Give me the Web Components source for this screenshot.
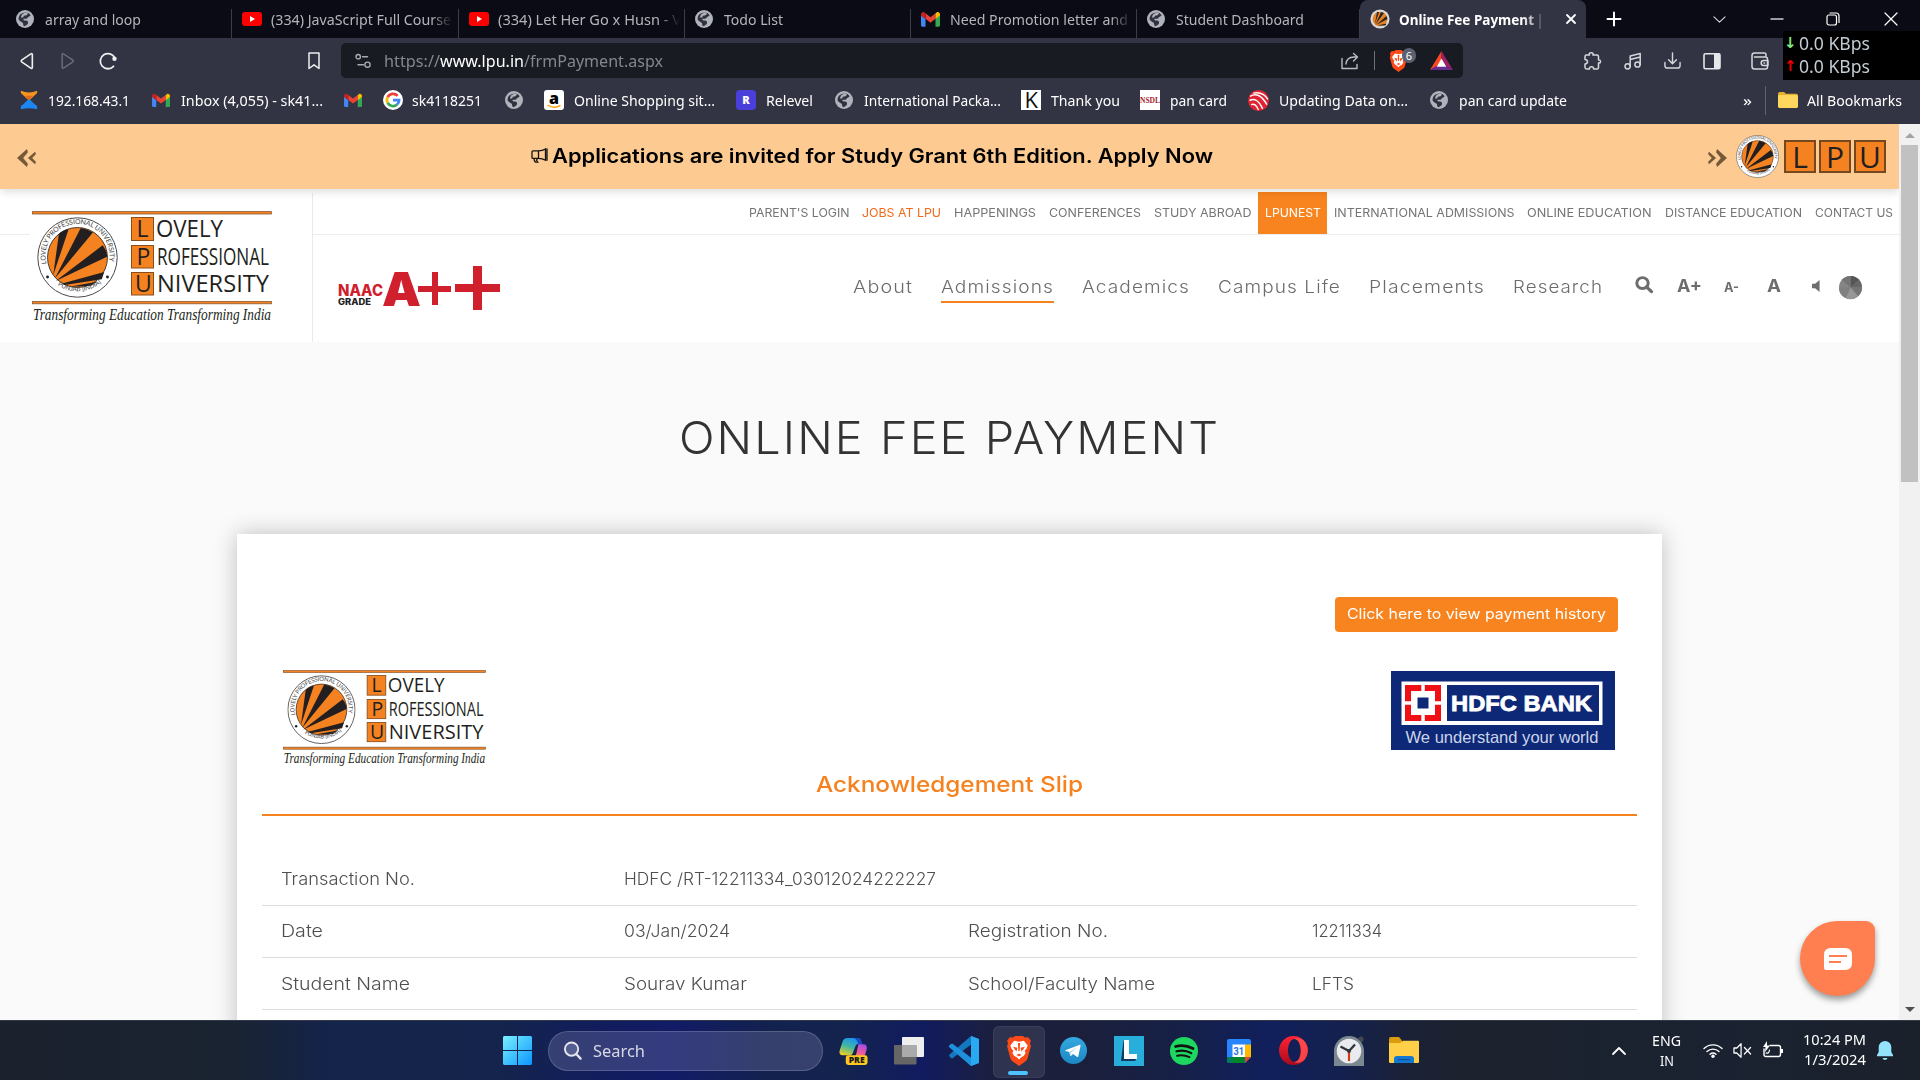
<!DOCTYPE html>
<html lang="en">
<head>
<meta charset="utf-8">
<title>Online Fee Payment</title>
<style>
html,body{margin:0;padding:0;width:1920px;height:1080px;overflow:hidden;background:#fff}
</style>
</head>
<body>
<desktop-screen></desktop-screen>
<script>
const UI = '"Noto Sans","Open Sans",sans-serif';
const WEB = 'Inter,"Liberation Sans",sans-serif';

const GLOBE = '<circle cx="12" cy="12" r="12" fill="#b0b3bb"/><path d="M11 3.500c4-1 7 1 8.500 3.500c-1 2-3 1.500-4 3c-.5 2-3 2-4.500 1.500c-2 0-1 2.500 1 2.500c2.500 0 4.500.5 4 3.500c-.5 2-3 3-5 4c-2-.5-1-3-2-4.500c-1.500-1.500-4-2-5.500-4.500c-.5-5 3-8.500 7.500-9z" fill="#30323f"/><path d="M13 3l3 1.500-2 2.500-3.500.5-1 2.500h-3l1.500-4z" fill="#b0b3bb"/>';
const GMAIL = '<path fill="#4285f4" d="M0 4.500v14a1.700 1.700 0 0 0 1.700 1.700h4V10.500L0 6z"/><path fill="#34a853" d="M18.300 20.200h4A1.700 1.700 0 0 0 24 18.500V6l-5.700 4.500z"/><path fill="#ea4335" d="M5.700 10.700V3.900L12 8.700l6.300-4.800v6.800L12 15.500z"/><path fill="#c5221f" d="M0 5.500v1.200l5.700 4.300V3.900L4.300 2.900C2.500 1.600 0 3 0 5.500z"/><path fill="#fbbc04" d="M18.300 3.900V11L24 6.700V5.500c0-2.500-2.500-3.900-4.300-2.600z"/>';
const LION = '<path fill="#fb4a17" d="M17.500 1.500 15.500 0h-7l-2 1.500-3-.3L1 4.500l.9 2.300L1 9.500l3.200 11.800c.3 1 1 1.700 1.800 2.300L12 28l6-4.400c.8-.6 1.500-1.300 1.800-2.300L23 9.500l-.9-2.700.9-2.300-2.500-3.300z"/><path fill="#fff" d="M12 5.300 7.500 4.500 4 8.800l1.100 3 1.700 2-.9 2 1.600 2.700 3 1.900L12 22l1.500-1.600 3-1.900 1.600-2.700-.9-2 1.700-2 1.100-3-3.500-4.300z"/><path fill="#fb4a17" d="m6.500 10 4 .9-.8 3.600L8 12.300zM17.500 10l-4 .9.800 3.600 1.700-2.200zM12 16.500l-2.500 1.300L12 19l2.500-1.200zM11 6.500h2l-.4 7.500h-1.200z"/>';
const SEAL = `<circle cx="50" cy="50" r="49" fill="#fff" stroke="#444" stroke-width="1.200"/>
<circle cx="50" cy="50" r="37" fill="#f58220" stroke="#231f20" stroke-width="1"/>
<g fill="#231f20"><path d="M20 72 27 21 Q32 16 39 15Z"/><path d="M22 76 54 13.500 Q63 15 69 19Z"/><path d="M23 79 81 35 Q87 43 86.500 49Z"/><path d="M31 82 83 68 80 77 34 84Z"/><path d="M40 86 74 80 67 85Z"/></g>
<circle cx="13" cy="74" r="1.800" fill="#222"/><circle cx="87" cy="74" r="1.800" fill="#222"/>
<path id="ar" d="M12.500 60.500A39.500 39.500 0 1 1 87.500 60.500" fill="none"/><path id="br" d="M7 60A45 45 0 0 0 93 60" fill="none"/>
<text font-family="Lato,sans-serif" font-size="8.500" fill="#444"><textPath href="#ar" textLength="140" startOffset="3">LOVELY PROFESSIONAL UNIVERSITY</textPath></text>
<text font-family="Lato,sans-serif" font-size="8" fill="#444"><textPath href="#br" textLength="58" startOffset="31">PUNJAB [INDIA]</textPath></text>`;

const S = (w, s) => `fill="none" stroke="${s || '#d6d7dc'}" stroke-width="${w}" stroke-linecap="round" stroke-linejoin="round"`;
const ICONS = {
 globe:['0 0 24 24',GLOBE], gmail:['0 0 24 23',GMAIL], brave:['0 0 24 28',LION], seal:['0 0 100 100',SEAL],
 youtube:['0 0 20 20','<rect y="3" width="20" height="14" rx="3" fill="#f00"/><path d="M8 7v6l5-3z" fill="#fff"/>'],
 lpufav:['0 0 20 20','<circle cx="10" cy="10" r="9.600" fill="#d8d8d8"/><circle cx="10" cy="10" r="7.300" fill="#e58228"/><path d="M5 15 7 3l2 0zM5.500 15.500 11 3l3 1zM6 16 16.500 7l1 3zM7 16.500l9.500-2-1 2z" fill="#2c2420"/>'],
 x:['0 0 10 10',`<path d="M1 1l8 8M9 1l-8 8" ${S(1.8,'#fff')}/>`],
 plus:['0 0 16 16',`<path d="M8 1.500v13M1.500 8h13" ${S(2,'#fff')}/>`],
 down:['0 0 14 8',`<path d="M1 1l6 6 6-6" ${S(1.2)}/>`],
 min:['0 0 14 14',`<path d="M.5 7h13" stroke="#fff" stroke-width="1.200"/>`],
 max:['0 0 14 14',`<rect x="1" y="3" width="9.500" height="10" rx="2" ${S(1.2,'#fff')}/><path d="M4 1h6a3 3 0 0 1 3 3v6.500" ${S(1.2,'#fff')}/>`],
 winx:['0 0 14 14',`<path d="M1 1l12 12M13 1L1 13" ${S(1.2,'#fff')}/>`],
 back:['0 0 14 20',`<path d="M12.800 3v14q0 2-1.600.8L1.700 11q-1-1 0-2l9.500-6.800q1.600-1.200 1.600.8z" ${S(1.7,'#eee')}/>`],
 fwd:['0 0 14 20',`<path d="M1.200 3v14q0 2 1.600.8L12.300 11q1-1 0-2L2.800 2.200Q1.200 1 1.200 3z" ${S(1.5,'#6b6d7a')}/>`],
 reload:['0 0 18 18',`<path d="M14.500 14.300A7.600 7.600 0 1 1 15.800 6" ${S(1.8,'#eee')}/><circle cx="15.500" cy="6.800" r="2.200" fill="#eee"/>`],
 mark:['0 0 12 18',`<path d="M1 1h10v15.500L6 12.800 1 16.500z" ${S(1.5,'#eee')}/>`],
 site:['0 0 16 16',`<circle cx="3.200" cy="3.700" r="2.200" ${S(1.4,'#a9abb3')}/><path d="M7.500 3.700h5M3 11.700h5.500" ${S(1.4,'#a9abb3')}/><circle cx="12.500" cy="11.700" r="2.600" ${S(1.4,'#a9abb3')}/>`],
 share:['0 0 18 18',`<path d="M1 6.500v10h15v-4M5 12c.5-5 4-7 8-7h3M12.500 1.500 16.500 5l-4 4" ${S(1.4,'#b9bbc2')}/>`],
 bat:['0 0 24 20','<path d="M12 0 0 20l12-7z" fill="#ff4724"/><path d="M12 0l12 20-12-7z" fill="#9e1f63"/><path d="M0 20h24l-12-7z" fill="#662d91"/><path d="M12 8l5 8.500H7z" fill="#fff"/>'],
 puzzle:['0 0 18 18',`<path d="M2 4.500Q2 3 3.500 3h3q-.8-2.300 1.700-2.300T9.900 3h4Q15.500 3 15.500 4.500V8q2-.3 2 1.500t-2 1.500v4Q15.500 17 14 17H10.500q.3-2.300-2-2.300t-2 2.300h-3Q2 17 2 15.300V12q2.500-.2 2.500-2.200T2 7.500z" ${S(1.5)}/>`],
 music:['0 0 18 18',`<circle cx="3.600" cy="14.300" r="2.600" ${S(1.5)}/><circle cx="13.500" cy="12.500" r="2.600" ${S(1.5)}/><path d="M6.200 14V4l10-2.500v11M6.200 7.500l10-2.500" ${S(1.5)}/>`],
 dl:['0 0 18 18',`<path d="M1 11v3.500Q1 17 3.500 17h11q2.500 0 2.500-2.500V11M9 1v11M4.800 8.200 9 12.400l4.200-4.200" ${S(1.5)}/>`],
 side:['0 0 18 18','<rect x="1" y="1.700" width="16" height="15" rx="1.500" fill="none" stroke="#e6e7ea" stroke-width="1.600"/><path d="M11 1.500h6v15.500h-6z" fill="#e6e7ea"/>'],
 wallet:['0 0 18 18',`<path d="M15 5V2.500Q15 1 13.500 1h-10Q1 1 1 3.500v11Q1 17 3.500 17h11q2 0 2-2V7q0-2-2-2h-11M17 8.500h-4.500q-2.300 0-2.300 2.500t2.300 2.500H17zM13 11h.5" ${S(1.5)}/>`],
 xender:['0 0 18 24','<path d="M1 1q8 4 16 0 1 3-2 5l-6 7-6-7Q0 4 1 1z" fill="#f7941d"/><path d="M1 23q8-2 16 0 1-4-2-5.500L9 10.500l-6 7Q0 19 1 23z" fill="#1c86f2"/><path d="M5 7l4 5 4-5z" fill="#e2661d"/>'],
 google:['0 0 24 24','<circle cx="12" cy="12" r="12" fill="#fff"/><g fill="none" stroke-width="3.300"><path d="M17.500 7A7.300 7.300 0 0 0 5.600 8.500" stroke="#ea4335"/><path d="M5.600 8.500a7.300 7.300 0 0 0 0 7" stroke="#fbbc05"/><path d="M5.600 15.500A7.300 7.300 0 0 0 16.800 17.500" stroke="#34a853"/><path d="M16.800 17.500a7.300 7.300 0 0 0 2.500-5.300H12" stroke="#4285f4"/></g>'],
 amazon:['0 0 20 20','<rect width="20" height="20" rx="3" fill="#fff"/><text x="10" y="13.500" text-anchor="middle" font-family="Open Sans,sans-serif" font-weight="800" font-size="16" fill="#000">a</text><path d="M3.500 15q6.500 4.500 13 .3" stroke="#f90" stroke-width="1.500" fill="none"/>'],
 relevel:['0 0 20 20','<rect width="20" height="20" rx="4" fill="#4b3fdc"/><text x="10" y="14" text-anchor="middle" font-family="Open Sans,sans-serif" font-weight="800" font-size="11" fill="#fff">R</text>'],
 k:['0 0 20 20','<rect width="20" height="20" fill="#fff"/><text x="3.500" y="18" textLength="13.500" lengthAdjust="spacingAndGlyphs" font-family="Open Sans,sans-serif" font-size="22" fill="#111">K</text>'],
 nsdl:['0 0 20 20','<rect width="20" height="20" fill="#fff"/><text x="0" y="13" textLength="20" lengthAdjust="spacingAndGlyphs" font-family="Liberation Serif,serif" font-weight="700" font-size="9" fill="#a3262e">NSDL</text>'],
 waves:['0 0 20 20','<circle cx="10" cy="10" r="10" fill="#e02433"/><g fill="none" stroke="#fff" stroke-width="1.400"><path d="M2 6q9-5 16 8M1.500 10q7-4 12.500 8M3 14q4-2 7 5M5 3q9-2 14 6"/></g>'],
 folder:['0 0 20 18','<path d="M0 2Q0 0 2 0h4l2 2h10q2 0 2 2v12q0 2-2 2H2q-2 0-2-2z" fill="#e5b030"/><path d="M0 5q0-1.500 2-1.500h16q2 0 2 2V16q0 2-2 2H2q-2 0-2-2z" fill="#ffd75e"/>'],
 laq:['0 0 20 20','<path d="M10.500 0 0 10l10.500 10L11.500 16.500 6.500 10l5-6.500z" fill="#75593a"/><path d="M19 3 11.500 10l7.500 7 1-2.500L16 10l4-4.500z" fill="#75593a"/>'],
 raq:['0 0 20 20','<path d="M9.500 0 20 10 9.500 20 8.500 16.500 13.500 10l-5-6.500z" fill="#75593a"/><path d="M1 3 8.500 10 1 17 0 14.500 4 10 0 5.500z" fill="#75593a"/>'],
 horn:['0 0 17 16','<path d="M1 4q0-1 1-1h5.500q4 0 7-2v12q-3-2-7-2H2q-1 0-1-1zM7.500 3v8M3 11q0 3 1.500 4.200h2.300L5.500 13l1-2M16 .5v13" fill="none" stroke="#111" stroke-width="1.300"/>'],
 search:['0 0 18 18',`<circle cx="7.500" cy="7.500" r="5.700" fill="none" stroke="#6d6d6d" stroke-width="3"/><path d="M11.500 11.500l5 5" stroke="#6d6d6d" stroke-width="3.200" stroke-linecap="round"/>`],
 spk:['0 0 9 13','<path d="M0 4h3.500L8.500 0v13L3.500 9H0z" fill="#6d6d6d"/>'],
 wheel:['0 0 24 24','<circle cx="12" cy="12" r="12" fill="#858585"/><path d="M12 12V0a12 12 0 0 1 9 4z" fill="#555"/><path d="M12 12l9-8a12 12 0 0 1 3 8z" fill="#666"/><path d="M12 12h12a12 12 0 0 1-4 9z" fill="#757575"/><path d="M12 12l8 9a12 12 0 0 1-13 2z" fill="#979797"/><path d="M12 12L7 23a12 12 0 0 1-7-11z" fill="#808080"/><path d="M12 12L3 4a12 12 0 0 1 9-4z" fill="#747474"/>'],
 win:['0 0 29 29','<defs><linearGradient id="w" x2="1" y2="1"><stop stop-color="#7af0ff"/><stop offset="1" stop-color="#0a96ff"/></linearGradient></defs><path d="M1 0h13v14H0V1zM15 0h13l1 1v13H15zM0 15h14v14H1l-1-1zM15 15h14v13l-1 1H15z" fill="url(#w)"/>'],
 tsearch:['0 0 20 20','<circle cx="9" cy="8.500" r="7" fill="#555e92" stroke="#e4e6ee" stroke-width="2"/><path d="M14.200 14l4.300 4.500" stroke="#e4e6ee" stroke-width="2.500" stroke-linecap="round"/>'],
 copilot:['0 0 30 29','<defs><linearGradient id="c" x1=".6" x2=".2" y2="1"><stop stop-color="#1893f0"/><stop offset=".5" stop-color="#43b6a0"/><stop offset="1" stop-color="#f5d020"/></linearGradient><linearGradient id="d" x1=".8" x2=".3" y2="1"><stop stop-color="#9b4bf0"/><stop offset=".6" stop-color="#f0589a"/><stop offset="1" stop-color="#ff8a5c"/></linearGradient></defs><path d="M9 1h10q3 0 4 4l.5 2h-3q-3 0-4 4l-2 5q-1 3-4 3H4q-5 0-3-6l3-9q1-3 5-3z" fill="url(#c)"/><path d="M18 1h2q2.500 0 3.500 4l.7 3H20q-1-6-5-7z" fill="#1948c4"/><path d="M20 7.500h5q5 0 3.500 6L27 18q-1 3-4 3h-9q3 0 4-4z" fill="url(#d)"/><rect x="7" y="19" width="22.500" height="10" rx="2.500" fill="#ffc81e"/><text x="10" y="27" textLength="16.500" lengthAdjust="spacingAndGlyphs" font-family="Open Sans,sans-serif" font-weight="800" font-size="8.500" fill="#1b1b1b">PRE</text>'],
 taskview:['0 0 30 28','<rect x="8" y="0" width="22" height="20" rx="1" fill="#eee"/><rect x="0" y="8" width="22.500" height="19.500" rx="1" fill="#666"/><path d="M8 8h14.500v12H8z" fill="#aaa"/>'],
 vscode:['0 0 30 30','<path d="M22 0l8 3v24l-8 3L9 18 4 22q-1 .8-2 0L.5 20.500q-1-1 0-2L22 0z" fill="#1478c0"/><path d="M22 0l8 3v24l-8 3z" fill="#29a9f2"/><path d="M0 9.500 2 8q1-.8 2 0l18 14v8L.5 11.500q-1-1-.5-2z" fill="#1e90dc"/><path d="M22 8.500v13L13.500 15z" fill="#171d4b"/>'],
 telegram:['0 0 28 28','<defs><linearGradient id="t" x2="0" y2="1"><stop stop-color="#34a9e0"/><stop offset="1" stop-color="#1c86c4"/></linearGradient></defs><circle cx="14" cy="14" r="14" fill="url(#t)"/><path d="M5.500 13.800 20.500 8q1-.3.800 1L19 20q-.3 1.200-1.500.5l-4-3-2 2q-.8.700-1-.5L9.700 15.500 5.700 14.500z" fill="#fff"/><path d="M9.700 15.500 18 10l-6.700 6.700-.5 3z" fill="#b8d9ec"/>'],
 lapp:['0 0 30 30','<rect width="30" height="30" fill="#27aedb"/><path d="M9.500 4.500 7 25h14l2-3H13V4.500z" fill="#103a64"/><path d="M10 4h5v14h8v5H10z" fill="#fff"/>'],
 spotify:['0 0 28 28','<circle cx="14" cy="14" r="14" fill="#1ed760"/><g fill="none" stroke="#121212" stroke-linecap="round"><path d="M5.500 9.500q9-2.500 17.500 2" stroke-width="2.700"/><path d="M6.500 14.300q8-2 14.800 1.800" stroke-width="2.200"/><path d="M7 18.700q6.500-1.500 12.500 1.500" stroke-width="1.900"/></g>'],
 gcal:['0 0 24 24','<rect width="24" height="24" rx="2" fill="#2684fc"/><path d="M18 5.500h6V18h-6z" fill="#ffba00"/><path d="M0 18h18v6H2q-2 0-2-2z" fill="#00832d"/><path d="M0 18h5.500v6H2q-2 0-2-2z" fill="#0066da" opacity=".25"/><path d="M18 18h6l-6 6z" fill="#ea4335"/><path d="M18.200 24 24 18.200V24z" fill="#171f4c"/><path d="M5.500 5.500H18V18H5.500z" fill="#fff"/><text x="6.500" y="16" textLength="10.500" lengthAdjust="spacingAndGlyphs" font-family="Roboto,sans-serif" font-weight="700" font-size="11" fill="#1a73e8">31</text>'],
 opera:['0 0 29 29','<defs><linearGradient id="o" x2="0" y2="1"><stop stop-color="#ff2434"/><stop offset="1" stop-color="#a80a1c"/></linearGradient></defs><path fill-rule="evenodd" d="M14.500 0a14.500 14.500 0 1 0 0 29 14.500 14.500 0 0 0 0-29zm1 3c3.800 0 6 5.500 6 11.500S19.300 26 15.500 26 9 20.500 9 14.500 11.700 3 15.500 3z" fill="url(#o)"/><path d="M15 3c2-2 6-1 9.200 1a14.500 14.500 0 0 1 0 21c-3.200 2-7 2.500-9.200 1 4.500 0 7-5.500 7-11.500S19.500 3 15 3z" fill="#ff4f50" opacity=".85"/>'],
 clock:['0 0 30 30','<path d="M24 2l4-2 2 4-3 3z" fill="#434850"/><path d="M0 15A15 15 0 0 1 30 15v15H0z" fill="#7c8891"/><circle cx="15" cy="15" r="12.300" fill="#e9ebee"/><path d="M6.500 10.500 15 15l6-6.500" fill="none" stroke="#30343a" stroke-width="2.300"/><path d="M15 15v10" stroke="#d23c11" stroke-width="2.200"/><circle cx="15" cy="15" r="1.900" fill="#30343a"/>'],
 explorer:['0 0 30 27','<path d="M0 2q0-2 2-2h8l3 3.500V10H0z" fill="#d99c0c"/><path d="M0 6h11l3-2.200h15q1 0 1 1V25q0 1-1 1H1q-1 0-1-1z" fill="#ffcf48"/><path d="M5 26v-4q0-3 3-3h14q3 0 3 3v4z" fill="#1478d0"/><path d="M9 22.700h12" stroke="#0a4a90" stroke-width="1"/>'],
 up:['0 0 14 8',`<path d="M1 7l6-6 6 6" ${S(1.8,'#fff')}/>`],
 wifi:['0 0 20 15',`<path d="M1 5.500a13 13 0 0 1 18 0M4 8.500a8.700 8.700 0 0 1 12 0M7 11.300a4.600 4.600 0 0 1 6 0" ${S(1.4,'#fff')}/><circle cx="10" cy="13.200" r="1.700" fill="#fff"/>`],
 mute:['0 0 20 15',`<path d="M1 5h3l4.500-4.200v13.400L4 10H1zM12 4.500l6.500 6.500M18.500 4.500 12 11" ${S(1.3,'#fff')}/>`],
 batt:['0 0 20 17',`<path d="M7 4.500h8.500q2 0 2 2v7q0 2-2 2H3q-2 0-2-2V8" ${S(1.4,'#fff')}/><path d="M18 8h2v4h-2zM4 0 0 6h2.500L2 11l5-6.500H4z" fill="#fff"/><path d="M3 12q3 1 3.500-3" ${S(1.2,'#fff')}/>`],
 bell:['0 0 16 19','<path d="M8 0a6.300 6.300 0 0 0-6.300 6.300V11L0 14v1.300h16V14l-1.700-3V6.300A6.300 6.300 0 0 0 8 0zM5.500 17h5q-.5 2-2.500 2t-2.500-2z" fill="#93e4fb"/>'],
 chat:['0 0 28 22','<path d="M7 0h14q7 0 7 7v8q0 7-7 7H2q-2 0-2-2V7q0-7 7-7z" fill="#fff"/><path d="M5 8h18M5 14h12" stroke="#ff7f50" stroke-width="2"/>']
};

const define = (name, css, html) => customElements.define(name, class extends HTMLElement {
  connectedCallback() {
    if (this.shadowRoot) return;
    this.attachShadow({mode: 'open'}).innerHTML = `<style>*{box-sizing:border-box}${css}:host{box-sizing:border-box}</style>${html}`;
  }
});

/* Inline text stretched or condensed to an exact advance width. */
customElements.define('fit-text', class extends HTMLElement {
  connectedCallback() {
    if (this.shadowRoot) return;
    const w = +this.getAttribute('w');
    this.attachShadow({mode: 'open'}).innerHTML = `<style>:host{display:inline-block;flex:none;width:${w}px;white-space:nowrap}span{display:inline-block;transform-origin:0 50%}</style><span><slot></slot></span>`;
    const s = this.shadowRoot.querySelector('span');
    const n = s.offsetWidth ? s.getBoundingClientRect().width : 0;
    if (n) s.style.transform = `scaleX(${w / n})`;
  }
});

customElements.define('ui-icon', class extends HTMLElement {
  connectedCallback() {
    if (this.shadowRoot) return;
    const [vb, body] = ICONS[this.getAttribute('name')];
    const w = this.getAttribute('w'), h = this.getAttribute('h') || w;
    this.attachShadow({mode: 'open'}).innerHTML = `<style>:host{display:block;flex:none;width:${w}px;height:${h}px}svg{display:block;width:100%;height:100%;overflow:visible}</style><svg viewBox="${vb}" preserveAspectRatio="none">${body}</svg>`;
  }
});

customElements.define('browser-tab', class extends HTMLElement {
  connectedCallback() {
    if (this.shadowRoot) return;
    const a = this.hasAttribute('active'), iw = this.getAttribute('iw') || 18;
    this.attachShadow({mode: 'open'}).innerHTML = `<style>:host{box-sizing:border-box;display:flex;align-items:center;flex:none;width:226px;height:38px;padding-left:10px;color:${a ? '#fff' : '#b4b5ba'};font:${a ? 700 : 400} 14.500px/20px ${UI};background:${a ? '#323443' : 'linear-gradient(#3c3d46,#3c3d46) right bottom/1px 29px no-repeat'};border-radius:${a ? '8px 8px 0 0' : 0}}
    div{overflow:hidden;white-space:nowrap;margin-left:${29 - iw}px;width:${a ? 153 : 182}px;height:20px;margin-top:-1px;${this.hasAttribute('fade') ? `-webkit-mask-image:linear-gradient(90deg,#000 ${a ? 80 : 88}%,transparent)` : ''}}
    ui-icon[name=x]{margin-left:14px}</style>
    <ui-icon name="${this.getAttribute('icon')}" w="${iw}"></ui-icon><div><slot></slot></div>${a ? '<ui-icon name="x" w="10"></ui-icon>' : ''}`;
  }
});

define('tab-strip', `:host{display:flex;height:38px;background:#0b0b15;padding-left:6px;align-items:center}
 .r{display:flex;align-items:center}`,
`<browser-tab icon="globe"><fit-text w="96">array and loop</fit-text></browser-tab>
<browser-tab icon="youtube" iw="20" fade style="width:227px"><fit-text w="180">(334) JavaScript Full Course</fit-text></browser-tab>
<browser-tab icon="youtube" iw="20" fade><fit-text w="183">(334) Let Her Go x Husn - V</fit-text></browser-tab>
<browser-tab icon="globe"><fit-text w="59">Todo List</fit-text></browser-tab>
<browser-tab icon="gmail" iw="19" fade><fit-text w="178">Need Promotion letter and</fit-text></browser-tab>
<browser-tab icon="globe" style="width:223px"><fit-text w="128">Student Dashboard</fit-text></browser-tab>
<browser-tab icon="lpufav" iw="20" active fade><fit-text w="135">Online Fee Payment</fit-text><fit-text w="9" style="font-weight:400">&nbsp;|</fit-text>&nbsp; |</browser-tab>
<div class="r"><ui-icon name="plus" w="16" style="margin-left:20px"></ui-icon><ui-icon name="down" w="13" h="7" style="margin-left:91px"></ui-icon>
<ui-icon name="min" w="14" style="margin-left:44px"></ui-icon><ui-icon name="max" w="14" style="margin-left:42px"></ui-icon><ui-icon name="winx" w="14" style="margin-left:44px"></ui-icon></div>`);

define('address-bar', `:host{display:flex;align-items:center;width:1122px;height:35px;margin-left:21px;border-radius:5px;background:#191b22;padding-left:14px;color:#85878e;font:17px/24px ${UI}}
 b{font-weight:400;color:#fff}.sp{flex:1}i{width:1px;height:19px;background:#70727a;margin:0 14px 0 15px}
 .shield{position:relative;margin-right:22px}.n{position:absolute;left:13px;top:-2px;width:14px;height:15px;border-radius:7px;background:#5d606e;color:#fff;font:11px/15px ${UI};text-align:center}`,
`<ui-icon name="site" w="16"></ui-icon><fit-text w="56" style="margin-left:13px">https://</fit-text><fit-text w="84"><b>www.lpu.in</b></fit-text><fit-text w="139">/frmPayment.aspx</fit-text><span class="sp"></span>
<ui-icon name="share" w="18"></ui-icon><i></i><span class="shield"><ui-icon name="brave" w="19" h="22"></ui-icon><span class="n">6</span></span><ui-icon name="bat" w="23" h="19" style="margin-right:10px"></ui-icon>`);

define('tool-bar', `:host{display:flex;align-items:center;height:45px;background:#323443;padding-left:20px}`,
`<ui-icon name="back" w="13.500" h="18"></ui-icon><ui-icon name="fwd" w="13.500" h="18" style="margin-left:27px"></ui-icon><ui-icon name="reload" w="18" style="margin-left:25px"></ui-icon><ui-icon name="mark" w="12" h="18" style="margin-left:191px"></ui-icon>
<address-bar></address-bar>
<ui-icon name="puzzle" w="18" style="margin-left:120px"></ui-icon><ui-icon name="music" w="18" style="margin-left:23px"></ui-icon><ui-icon name="dl" w="17" style="margin-left:22px"></ui-icon><ui-icon name="side" w="18" style="margin-left:22px"></ui-icon><ui-icon name="wallet" w="18" style="margin-left:30px"></ui-icon>`);

const BM = [['xender',18,20,10,82,'192.168.43.1'],['gmail',18,22,11,142,'Inbox (4,055) - sk41...'],['gmail',18,21],['google',20,21,9,70,'sk4118251'],['globe',18,23],['amazon',20,21,10,141,'Online Shopping sit...'],['relevel',20,21,10,47,'Relevel'],['globe',18,22,11,137,'International Packa...'],['k',20,20,10,69,'Thank you'],['nsdl',20,20,10,57,'pan card'],['waves',21,21,10,129,'Updating Data on...'],['globe',18,22,11,108,'pan card update']];
define('bookmark-bar', `:host{display:flex;align-items:center;height:41px;background:#323443;color:#fff;font:14.500px/20px ${UI};padding-bottom:7px}.sp{flex:1}i{width:1px;height:29px;background:#60626e;margin:0 12px 0 13px}`,
BM.map(b => `<ui-icon name="${b[0]}" w="${b[1]}" h="${b[0] === 'xender' ? 20 : b[0] === 'gmail' ? 17 : b[1]}" style="margin-left:${b[2]}px"></ui-icon>${b[5] ? `<fit-text w="${b[4]}" style="margin-left:${b[3]}px">${b[5]}</fit-text>` : ''}`).join('') +
`<span class="sp"></span><fit-text w="9">»</fit-text><i></i><ui-icon name="folder" w="20" h="16"></ui-icon><fit-text w="95" style="margin:0 18px 0 9px">All Bookmarks</fit-text>`);

define('net-speed', `:host{position:absolute;left:1783px;top:31px;width:137px;height:49px;background:#000;color:#c3ccd3;display:flex;flex-direction:column;font:18px/24px ${UI};padding-left:4px}
 div{display:flex;align-items:center;height:23px}span{width:12px;font:700 15px/20px "DejaVu Sans",sans-serif;text-indent:-3px}.g{color:#7fe87f}.r{color:#f00000}`,
`<div><span class="g">↓</span><fit-text w="71">0.0 KBps</fit-text></div><div><span class="r">↑</span><fit-text w="71">0.0 KBps</fit-text></div>`);

define('grant-banner', `:host{position:relative;z-index:2;flex:none;display:flex;align-items:center;height:65px;background:#fdcb91;box-shadow:0 3px 8px rgba(0,0,0,.13);padding:0 13px 0 17px}
 .t{flex:1;display:flex;align-items:center;padding:0 0 2px 495px;color:#000;font:600 19.500px/26px ${WEB};gap:4px}
 .q{width:32px;height:33px;margin-left:3px;background:#f58220;border:2px solid #75481f;color:#231f20;font:30px/29px "Open Sans",sans-serif;display:flex;justify-content:center}`,
`<ui-icon name="laq" w="19" h="18" style="margin-top:3px"></ui-icon><div class="t"><ui-icon name="horn" w="17" h="15"></ui-icon><fit-text w="661">Applications are invited for Study Grant 6th Edition. Apply Now</fit-text></div>
<ui-icon name="raq" w="19" h="18" style="margin-top:3px;margin-right:9px"></ui-icon><ui-icon name="seal" w="43" style="margin-right:2px"></ui-icon><span class="q">L</span><span class="q">P</span><span class="q">U</span>`);

define('lpu-logo', `:host{display:block;flex:none}.root{display:block;width:100%;height:100%;overflow:visible}`,
`<svg class="root" viewBox="0 0 240 116" preserveAspectRatio="none"><g fill="#f58220" stroke="#8a5a35" stroke-width=".8"><rect x=".4" y=".6" width="239" height="2.400"/><rect x=".4" y="90.400" width="239" height="2.400"/></g>
<svg x="5" y="6" width="81" height="81" viewBox="0 0 100 100">${SEAL}</svg>
<g fill="#f58220" stroke="#8a4e1c" stroke-width="1"><rect x="99.500" y="6.500" width="22" height="23"/><rect x="99.500" y="34.500" width="22" height="22.500"/><rect x="99.500" y="61.500" width="22" height="22.500"/></g>
<g font-family="Open Sans,Noto Sans,sans-serif" font-size="23" fill="#231f20"><text x="104.500" y="26">L</text><text x="104.500" y="54">P</text><text x="103" y="81">U</text>
<text x="124" y="26" textLength="67" lengthAdjust="spacingAndGlyphs">OVELY</text><text x="125" y="54" textLength="112" lengthAdjust="spacingAndGlyphs">ROFESSIONAL</text><text x="125" y="81" textLength="112" lengthAdjust="spacingAndGlyphs">NIVERSITY</text></g>
<text x="1" y="109" textLength="238" lengthAdjust="spacingAndGlyphs" font-family="Liberation Serif,serif" font-style="italic" font-size="17" fill="#231f20">Transforming Education Transforming India</text></svg>`);

define('naac-grade', `:host{display:block;flex:none;width:164px;height:46px}svg{display:block;overflow:visible}`,
`<svg width="164" height="46"><g fill="#d0202e" font-family="Inter,sans-serif" font-weight="800"><text x="0" y="32" font-size="15.500" textLength="45" lengthAdjust="spacingAndGlyphs">NAAC</text><text x="44" y="41.500" font-size="47" textLength="39" lengthAdjust="spacingAndGlyphs" font-weight="900">A</text><path d="M80 22h14V8h6v14h13v6h-13v13h-6V28H80zM117 20h18V2h9v18h18v8h-18v18h-9V28h-18z"/></g><text x="0" y="40.500" font-family="Inter,sans-serif" font-weight="800" font-size="8.500" textLength="33" lengthAdjust="spacingAndGlyphs" fill="#222">GRADE</text></svg>`);

const TOP = [["PARENT'S LOGIN",100.5],['JOBS AT LPU',79,'o'],['HAPPENINGS',82],['CONFERENCES',92],['STUDY ABROAD',97.5],['LPUNEST',56,'b'],['INTERNATIONAL ADMISSIONS',180.5],['ONLINE EDUCATION',124.5],['DISTANCE EDUCATION',137],['CONTACT US',78]];
const NAV = [['About',60],['Admissions',113,'u'],['Academics',108],['Campus Life',123],['Placements',116],['Research',90]];
define('site-header', `:host{display:flex;flex:none;height:153px;background:#fff}
 .l{width:313px;border-right:1px solid #eaeaea;margin-top:4px;padding:18px 0 0 32px;background:linear-gradient(#eee,#eee) 0 41px/30px 1px no-repeat}
 .r{flex:1;display:flex;flex-direction:column}
 .top{height:46px;border-bottom:1px solid #ececec;display:flex;justify-content:flex-end;padding-top:3px;font:400 11.800px/42px ${WEB};color:#757575}
 .top span{padding:0 6.500px;height:42px}.o{color:#f26a1b}.b{background:#f8841f;color:#fff}
 .main{flex:1;display:flex;align-items:center;padding:0 37px 4px 25px;color:#777}
 nav{display:flex;gap:28px;margin-left:auto;font:300 17.500px/26px ${WEB};letter-spacing:1px;color:#6c6c6c}
 nav span{height:32px;padding-top:3px}.u{border-bottom:2px solid #f5821f;}
 .f{display:flex;align-items:center;font-family:${WEB};font-weight:700;color:#6d6d6d;line-height:22px;padding-bottom:1px}`,
`<div class="l"><lpu-logo style="width:240px;height:116px"></lpu-logo></div><div class="r"><div class="top">${TOP.map(t => `<span class="${t[2] || ''}"><fit-text w="${t[1]}">${t[0]}</fit-text></span>`).join('')}</div>
<div class="main"><naac-grade></naac-grade><nav>${NAV.map(t => `<span class="${t[2] || ''}"><fit-text w="${t[1]}">${t[0]}</fit-text></span>`).join('')}</nav>
<div class="f"><ui-icon name="search" w="18" h="17" style="margin:0 0 3px 32px"></ui-icon><fit-text w="25" style="font-size:17.500px;margin-left:24px">A+</fit-text><fit-text w="15" style="font-size:13px;margin:2px 0 0 22px">A-</fit-text><fit-text w="14" style="font-size:17.500px;margin-left:28px">A</fit-text><ui-icon name="spk" w="8" h="12" style="margin-left:31px"></ui-icon><ui-icon name="wheel" w="23" style="margin:3px 0 0 19px"></ui-icon></div></div></div>`);

define('hdfc-logo', `:host{display:block;width:224px;height:79px}svg{display:block}`,
`<svg width="224" height="79"><rect width="224" height="79" fill="#0c2876"/><path d="M10.500 10.500h201v43.500h-201z" fill="#fff"/><path d="M56 14h152v36H56z" fill="#0c2876"/><path d="M14 14h36v36H14z" fill="#f00f14"/><path d="M20 20h24v24H20z" fill="#fff"/><path d="M30.300 14h3.500v36h-3.500zM14 30.300h36v3.500H14z" fill="#fff"/><path d="M26.500 26.500h11v11h-11z" fill="#0c2876"/>
<text x="60" y="40" font-family="Liberation Sans,sans-serif" font-weight="700" font-size="22.500" stroke="#fff" stroke-width=".8" fill="#fff" textLength="141" lengthAdjust="spacingAndGlyphs">HDFC BANK</text><text x="14.500" y="72" font-family="Liberation Sans,sans-serif" font-size="16.500" fill="#ccd4ea" textLength="193" lengthAdjust="spacingAndGlyphs">We understand your world</text></svg>`);

const ROWS = [[['Transaction No.',134],['HDFC /RT-12211334_03012024222227',312]],[['Date',42],['03/Jan/2024',106],['Registration No.',140],['12211334',70]],[['Student Name',129],['Sourav Kumar',123],['School/Faculty Name',187],['LFTS',42]]];
define('slip-table', `:host{display:block;margin-top:37.500px;font:300 16.800px/24px ${WEB};color:#4f4f4f}
 .row{display:grid;grid-template-columns:repeat(4,343.750px);height:52.300px;align-items:center;border-bottom:1px solid #dcdcdc}.row>*{margin-left:18.500px}`,
ROWS.map(r => `<div class="row">${r.map(c => `<fit-text w="${c[1]}">${c[0]}</fit-text>`).join('')}</div>`).join(''));

define('payment-card', `:host{display:block;flex:none;width:1425px;height:560px;margin:0 auto;background:#fff;box-shadow:0 0 22px rgba(0,0,0,.24);padding:63px 25px 0}
 .btn{display:flex;align-items:center;justify-content:center;width:283px;height:35px;margin:0 19px 0 auto;border-radius:4px;background:#f8841f;color:#fff;font:400 14.500px/20px ${WEB};padding-bottom:1px}
 .logos{display:flex;justify-content:space-between;padding:0 22px 0 21px;margin-top:38px;height:97px}
 h2{margin:0;height:49px;display:flex;justify-content:center;align-items:center;border-bottom:2px solid #f5821f;color:#f5821f;font:500 22px/34px ${WEB};padding-bottom:13px}`,
`<div class="btn"><fit-text w="259">Click here to view payment history</fit-text></div><div class="logos"><lpu-logo style="width:203px;height:99px"></lpu-logo><hdfc-logo style="margin-top:1px"></hdfc-logo></div><h2><fit-text w="267">Acknowledgement Slip</fit-text></h2><slip-table></slip-table>`);

define('lpu-site', `:host{flex:1;display:flex;flex-direction:column;background:#fafafa;overflow:hidden}
 h1{margin:0;flex:none;height:192px;display:flex;align-items:center;justify-content:center;font:300 45px/60px ${WEB};color:#333;letter-spacing:2px}`,
`<grant-banner></grant-banner><site-header></site-header><h1><fit-text w="541">ONLINE FEE PAYMENT</fit-text></h1><payment-card></payment-card>`);

define('scroll-bar', `:host{display:flex;flex-direction:column;align-items:center;width:21px;background:#f1f1f1;padding:9px 0 8px}
 .u,.d{border:5px solid transparent;width:0;height:0}.u{border-top:0;border-bottom-color:#a3a3a3}.d{border-bottom:0;border-top-color:#505050;margin-top:auto}.t{width:17px;height:337px;background:#c1c1c1;margin-top:7px}`,
`<div class="u"></div><div class="t"></div><div class="d"></div>`);

define('chat-bubble', `:host{position:absolute;left:1800px;top:921px;width:75px;height:75px;border-radius:50% 9px 50% 50%;background:#ff7f50;box-shadow:0 4px 6px rgba(0,0,0,.38);display:flex;align-items:center;justify-content:center}`,
`<ui-icon name="chat" w="28" h="22"></ui-icon>`);

const APPS = [['copilot',29,28],['taskview',30,28],['vscode',30,30],['brave',26,30],['telegram',27,27],['lapp',30,30],['spotify',28,28],['gcal',24,24],['opera',29,29],['clock',30,30],['explorer',30,27]];
define('task-bar', `:host{display:flex;align-items:center;height:60px;border-top:1px solid #333b4a;color:#fff;font:15px/20px ${UI};padding-left:503px;
 background:linear-gradient(90deg,#1b212d 0,#1a2331 12%,#14244a 17%,#14244c 26%,#121d5c 31%,#121b66 35%,#13214f 40%,#14234e 44%,#111b60 48%,#1a1f40 51.500%,#1b1f3a 56%,#162046 61%,#111f5c 66%,#14214e 70%,#1a2138 73%,#1c222d 76%,#1a2231 90%,#1b212b 100%)}
 .search{display:flex;align-items:center;width:275px;height:40px;border-radius:20px;margin:0 3px 0 16px;padding-left:14px;border:1px solid rgba(255,255,255,.17);background:rgba(190,190,230,.2);color:#d7d9e4;font-size:16.500px}
 .app{position:relative;width:55px;height:50px;display:flex;align-items:center;justify-content:center}
 .on::before{content:"";position:absolute;left:2px;top:0;width:50px;height:50px;border-radius:6px;background:rgba(255,255,255,.09);border:1px solid rgba(255,255,255,.06)}
 .on::after{content:"";position:absolute;left:17px;top:45px;width:20px;height:4px;border-radius:2px;background:#4cc2ff}
 .on ui-icon{position:relative}.col{display:flex;flex-direction:column;align-items:flex-end}.tray{display:flex;align-items:center;margin-left:auto;padding-right:27px}`,
`<ui-icon name="win" w="29"></ui-icon><div class="search"><ui-icon name="tsearch" w="19"></ui-icon><fit-text w="52" style="margin-left:11px">Search</fit-text></div>
${APPS.map(a => `<div class="app ${a[0] === 'brave' ? 'on' : ''}"><ui-icon name="${a[0]}" w="${a[1]}" h="${a[2]}"></ui-icon></div>`).join('')}
<div class="tray"><ui-icon name="up" w="14" h="8"></ui-icon><div class="col" style="align-items:center;margin:-2px 0 0 26px"><fit-text w="29">ENG</fit-text><fit-text w="14">IN</fit-text></div><ui-icon name="wifi" w="20" h="15" style="margin-left:22px"></ui-icon><ui-icon name="mute" w="19" h="15" style="margin-left:10px"></ui-icon><ui-icon name="batt" w="20" h="17" style="margin-left:11px;margin-top:-3px"></ui-icon><div class="col" style="margin:-3px 0 0 20px"><fit-text w="63">10:24 PM</fit-text><fit-text w="62">1/3/2024</fit-text></div><ui-icon name="bell" w="16" h="19" style="margin-left:11px"></ui-icon></div>`);

define('desktop-screen', `:host{position:relative;display:flex;flex-direction:column;width:1920px;height:1080px;overflow:hidden}
 .view{display:flex;height:896px;overflow:hidden}`,
`<tab-strip></tab-strip><tool-bar></tool-bar><bookmark-bar></bookmark-bar><div class="view"><lpu-site></lpu-site><scroll-bar></scroll-bar></div><task-bar></task-bar><net-speed></net-speed><chat-bubble></chat-bubble>`);
</script>
</body>
</html>
